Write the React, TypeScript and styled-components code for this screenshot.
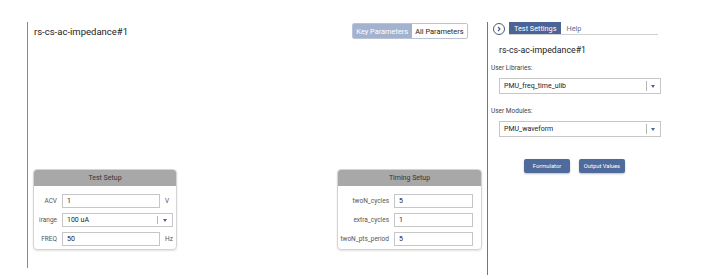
import React from "react";
import styled, { createGlobalStyle } from "styled-components";

const GlobalStyle = createGlobalStyle`
  html, body {
    margin: 0;
    padding: 0;
    background: #ffffff;
    font-family: Roboto, "Liberation Sans", Arial, sans-serif;
    color: #222;
  }
`;

const Page = styled.div`
  display: flex;
  width: 715px;
  height: 279px;
  padding-top: 22px;
  box-sizing: border-box;
`;

const Main = styled.div`
  margin-left: 27px;
  width: 460px;
  height: 246px;
  border-left: 1px solid #8a8a8a;
  box-sizing: border-box;
  display: flex;
  flex-direction: column;
  justify-content: space-between;
  padding: 0 5px 18px 5px;
`;

const Header = styled.div`
  display: flex;
  justify-content: space-between;
  align-items: flex-start;
  padding-right: 14px;
`;

const Title = styled.div`
  font-size: 9.5px;
  line-height: 14px;
  margin-top: 3px;
  padding-left: 1px;
  color: #222;
`;

const Toggle = styled.div`
  display: flex;
  margin-top: 1px;
  border: 1px solid #b9c3d4;
  border-radius: 2px;
  height: 16px;
  box-sizing: border-box;
  overflow: hidden;
`;

const ToggleItem = styled.div<{ $active?: boolean }>`
  display: flex;
  align-items: center;
  padding: 0 3.5px;
  font-size: 7.4px;
  background: ${(p) => (p.$active ? "#a3b3cf" : "#ffffff")};
  color: ${(p) => (p.$active ? "#ffffff" : "#222")};
`;

const PanelRow = styled.div`
  display: flex;
  justify-content: space-between;
  align-items: flex-end;
`;

const Panel = styled.div<{ $width: number }>`
  width: ${(p) => p.$width}px;
  border: 1px solid #d4d4d4;
  border-radius: 4px;
  box-shadow: 0 1px 2px rgba(0, 0, 0, 0.12);
  box-sizing: border-box;
  overflow: hidden;
  padding-bottom: 3px;
`;

const PanelHead = styled.div`
  background: #a8a8a8;
  height: 16px;
  display: flex;
  align-items: center;
  justify-content: center;
  font-size: 7px;
  color: #333;
  margin-bottom: 8px;
`;

const FieldRow = styled.div<{ $labelWidth: number; $unitWidth: number }>`
  display: grid;
  grid-template-columns: ${(p) => p.$labelWidth}px 1fr ${(p) => p.$unitWidth}px;
  align-items: center;
  height: 14px;
  margin-bottom: 5px;
  &:last-child {
    margin-bottom: 0;
  }
`;

const Label = styled.div`
  font-size: 6.5px;
  color: #555;
  text-align: right;
  padding-right: 5px;
  white-space: nowrap;
`;

const Unit = styled.div`
  font-size: 6.5px;
  color: #555;
  padding-left: 5px;
`;

const Input = styled.div<{ $span?: boolean }>`
  height: 14px;
  border: 1px solid #c6c6c6;
  box-sizing: border-box;
  display: flex;
  align-items: center;
  padding-left: 4px;
  font-size: 7px;
  color: #222;
  grid-column: ${(p) => (p.$span ? "2 / 4" : "auto")};
  margin-right: ${(p) => (p.$span ? "3px" : "0")};
`;

const SelectArrow = styled.div<{ $w: number }>`
  margin-left: auto;
  width: ${(p) => p.$w}px;
  height: 100%;
  display: flex;
  align-items: center;
  justify-content: center;
  position: relative;
  &::before {
    content: "";
    position: absolute;
    left: 0;
    top: 2px;
    bottom: 2px;
    border-left: 1px solid #b5b5b5;
  }
  &::after {
    content: "";
    border-left: 2.5px solid transparent;
    border-right: 2.5px solid transparent;
    border-top: 3px solid #4a6496;
  }
`;

const Side = styled.div`
  width: 228px;
  height: 253px;
  border-left: 1px solid #777;
  box-sizing: border-box;
  padding-left: 3px;
`;

const TabBar = styled.div`
  display: flex;
  align-items: center;
  height: 13px;
`;

const CircleBtn = styled.div`
  width: 10px;
  height: 10px;
  border: 1px solid #4a5a78;
  border-radius: 50%;
  display: flex;
  align-items: center;
  justify-content: center;
  margin-right: 4px;
  margin-left: 2px;
`;

const Tabs = styled.div`
  display: flex;
  width: 149px;
  border-bottom: 1px solid #d0d0d0;
  align-self: stretch;
`;

const Tab = styled.div<{ $active?: boolean }>`
  padding: 0 5px;
  display: flex;
  align-items: center;
  font-size: 7.3px;
  background: ${(p) => (p.$active ? "#4a6496" : "transparent")};
  color: ${(p) => (p.$active ? "#ffffff" : "#5f6f8c")};
`;

const SideTitle = styled.div`
  margin: 9px 0 0 8px;
  font-size: 8.8px;
  line-height: 13px;
`;

const SideLabel = styled.div<{ $gap: number }>`
  font-size: 6.5px;
  color: #444;
  margin-top: ${(p) => p.$gap}px;
  line-height: 9px;
`;

const SideSelect = styled.div`
  margin: 5px 0 0 8px;
  width: 162px;
  height: 16px;
  border: 1px solid #c6c6c6;
  box-sizing: border-box;
  display: flex;
  align-items: center;
  padding-left: 4px;
  font-size: 7px;
`;

const ButtonRow = styled.div`
  display: flex;
  gap: 9px;
  margin: 22px 0 0 33px;
`;

const ActionButton = styled.div`
  width: 46px;
  height: 14px;
  background: #4f6b9c;
  color: #fff;
  border-radius: 2px;
  font-size: 5.8px;
  display: flex;
  align-items: center;
  justify-content: center;
  box-shadow: 0 1px 2px rgba(0, 0, 0, 0.25);
`;

export default function App() {
  return (
    <>
      <GlobalStyle />
      <Page>
        <Main>
          <Header>
            <Title>rs-cs-ac-impedance#1</Title>
            <Toggle>
              <ToggleItem $active>Key Parameters</ToggleItem>
              <ToggleItem>All Parameters</ToggleItem>
            </Toggle>
          </Header>
          <PanelRow>
            <Panel $width={144}>
              <PanelHead>Test Setup</PanelHead>
              <FieldRow $labelWidth={28} $unitWidth={16}>
                <Label>ACV</Label>
                <Input>1</Input>
                <Unit>V</Unit>
              </FieldRow>
              <FieldRow $labelWidth={28} $unitWidth={16}>
                <Label>irange</Label>
                <Input $span>
                  100 uA
                  <SelectArrow $w={15} />
                </Input>
              </FieldRow>
              <FieldRow $labelWidth={28} $unitWidth={16}>
                <Label>FREQ</Label>
                <Input>50</Input>
                <Unit>Hz</Unit>
              </FieldRow>
            </Panel>
            <Panel $width={145}>
              <PanelHead>Timing Setup</PanelHead>
              <FieldRow $labelWidth={56} $unitWidth={8}>
                <Label>twoN_cycles</Label>
                <Input>5</Input>
                <span />
              </FieldRow>
              <FieldRow $labelWidth={56} $unitWidth={8}>
                <Label>extra_cycles</Label>
                <Input>1</Input>
                <span />
              </FieldRow>
              <FieldRow $labelWidth={56} $unitWidth={8}>
                <Label>twoN_pts_period</Label>
                <Input>5</Input>
                <span />
              </FieldRow>
            </Panel>
          </PanelRow>
        </Main>
        <Side>
          <TabBar>
            <CircleBtn>
              <svg width="6" height="6" viewBox="0 0 6 6">
                <path d="M2 1 L4 3 L2 5" fill="none" stroke="#4a5a78" strokeWidth="1.1" />
              </svg>
            </CircleBtn>
            <Tabs>
              <Tab $active>Test Settings</Tab>
              <Tab>Help</Tab>
            </Tabs>
          </TabBar>
          <SideTitle>rs-cs-ac-impedance#1</SideTitle>
          <SideLabel $gap={7}>User Libraries:</SideLabel>
          <SideSelect>
            PMU_freq_time_ulib
            <SelectArrow $w={14} />
          </SideSelect>
          <SideLabel $gap={13}>User Modules:</SideLabel>
          <SideSelect>
            PMU_waveform
            <SelectArrow $w={14} />
          </SideSelect>
          <ButtonRow>
            <ActionButton>Formulator</ActionButton>
            <ActionButton>Output Values</ActionButton>
          </ButtonRow>
        </Side>
      </Page>
    </>
  );
}
